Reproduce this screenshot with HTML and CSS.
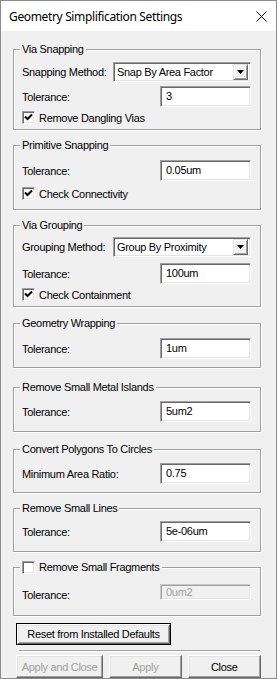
FILE: index.html
```html
<!DOCTYPE html>
<html>
<head>
<meta charset="utf-8">
<link rel="stylesheet" href="styles.css">
</head>
<body>
<div class="window">
  <div class="titlebar">
    <span class="title">Geometry Simplification Settings</span>
    <svg class="close-x" width="11" height="11" viewBox="0 0 11 11"><path d="M0.5 0.5 L10.5 10.5 M10.5 0.5 L0.5 10.5" stroke="#000" stroke-width="1" fill="none"/></svg>
  </div>
  <div class="content">
    <fieldset class="group g1">
      <legend>Via Snapping</legend>
      <div class="row row-combo">
        <span class="label">Snapping Method:</span>
        <div class="combo"><span class="combo-text">Snap By Area Factor</span><span class="combo-btn"><svg width="7" height="4" viewBox="0 0 7 4"><path d="M0 0 H7 L3.5 4 Z" fill="#000"/></svg></span></div>
      </div>
      <div class="row row-field gap-4">
        <span class="label">Tolerance:</span>
        <div class="field">3</div>
      </div>
      <div class="check-row gap-4">
        <span class="checkbox"><svg width="9" height="9" viewBox="0 0 9 9"><path d="M1 3.5 L3.5 6 L8 1.5" stroke="#000" stroke-width="2" fill="none"/></svg></span>
        <span>Remove Dangling Vias</span>
      </div>
    </fieldset>

    <fieldset class="group g2">
      <legend>Primitive Snapping</legend>
      <div class="row row-field">
        <span class="label">Tolerance:</span>
        <div class="field">0.05um</div>
      </div>
      <div class="check-row gap-6">
        <span class="checkbox"><svg width="9" height="9" viewBox="0 0 9 9"><path d="M1 3.5 L3.5 6 L8 1.5" stroke="#000" stroke-width="2" fill="none"/></svg></span>
        <span>Check Connectivity</span>
      </div>
    </fieldset>

    <fieldset class="group g3">
      <legend>Via Grouping</legend>
      <div class="row row-combo">
        <span class="label">Grouping Method:</span>
        <div class="combo"><span class="combo-text">Group By Proximity</span><span class="combo-btn"><svg width="7" height="4" viewBox="0 0 7 4"><path d="M0 0 H7 L3.5 4 Z" fill="#000"/></svg></span></div>
      </div>
      <div class="row row-field gap-6">
        <span class="label">Tolerance:</span>
        <div class="field">100um</div>
      </div>
      <div class="check-row gap-4">
        <span class="checkbox"><svg width="9" height="9" viewBox="0 0 9 9"><path d="M1 3.5 L3.5 6 L8 1.5" stroke="#000" stroke-width="2" fill="none"/></svg></span>
        <span>Check Containment</span>
      </div>
    </fieldset>

    <fieldset class="group g4">
      <legend>Geometry Wrapping</legend>
      <div class="row row-field">
        <span class="label">Tolerance:</span>
        <div class="field">1um</div>
      </div>
    </fieldset>

    <fieldset class="group g5">
      <legend>Remove Small Metal Islands</legend>
      <div class="row row-field">
        <span class="label">Tolerance:</span>
        <div class="field">5um2</div>
      </div>
    </fieldset>

    <fieldset class="group g6">
      <legend>Convert Polygons To Circles</legend>
      <div class="row row-field">
        <span class="label">Minimum Area Ratio:</span>
        <div class="field">0.75</div>
      </div>
    </fieldset>

    <fieldset class="group g7">
      <legend>Remove Small Lines</legend>
      <div class="row row-field">
        <span class="label">Tolerance:</span>
        <div class="field">5e-06um</div>
      </div>
    </fieldset>

    <fieldset class="group g8">
      <legend class="legend-check"><span class="checkbox"></span><span>Remove Small Fragments</span></legend>
      <div class="row row-field">
        <span class="label">Tolerance:</span>
        <div class="field field-disabled">0um2</div>
      </div>
    </fieldset>

    <div class="reset-wrap">
      <button class="btn btn-default">Reset from Installed Defaults</button>
    </div>
    <div class="separator"></div>
    <div class="button-bar">
      <button class="btn btn-disabled btn-applyclose">Apply and Close</button>
      <button class="btn btn-disabled btn-apply">Apply</button>
      <button class="btn btn-close">Close</button>
    </div>
  </div>
</div>
</body>
</html>
```

FILE: styles.css
```css
* {
  box-sizing: border-box;
}

html, body {
  margin: 0;
  padding: 0;
}

body {
  width: 277px;
  height: 679px;
  overflow: hidden;
  background: #3a3a3a;
  font-family: "Liberation Sans", Arial, sans-serif;
  font-size: 11px;
  letter-spacing: -0.3px;
  color: #000;
}

.window {
  width: 277px;
  height: 679px;
  border: 1px solid #8c8c8c;
  background: #f0f0f0;
  display: flex;
  flex-direction: column;
}

.titlebar {
  height: 30px;
  flex: none;
  background: #fff;
  display: flex;
  align-items: center;
  justify-content: space-between;
  padding: 0 9px 0 8px;
}

.title {
  font-family: "Noto Sans", sans-serif;
  font-size: 12px;
  letter-spacing: -0.35px;
  color: #000;
}

.close-x {
  display: block;
}

.content {
  padding: 0 15px 0 12px;
  display: flex;
  flex-direction: column;
}

.group {
  margin: 0;
  min-width: 0;
  border: 1px solid #a0a0a0;
  box-shadow: inset 1px 1px 0 #fff, 1px 1px 0 #fff;
  padding: 0 9px 0 8px;
  display: flex;
  flex-direction: column;
}

.group legend {
  padding: 0 2px;
  margin-left: -2px;
  height: 14px;
  line-height: 14px;
  background: #f0f0f0;
}

.legend-check {
  display: flex;
  align-items: center;
  gap: 4px;
}

.g1 { margin-top: 11px; padding-top: 6px; padding-bottom: 5px; }
.g2 { margin-top: 8px; padding-top: 8px; padding-bottom: 9px; }
.g3 { margin-top: 8px; padding-top: 5px; padding-bottom: 5px; }
.g4 { margin-top: 9px; padding-top: 8px; padding-bottom: 8px; }
.g5 { margin-top: 12px; padding-top: 7px; padding-bottom: 9px; }
.g6 { margin-top: 10px; padding-top: 7px; padding-bottom: 8px; }
.g7 { margin-top: 8px; padding-top: 6px; padding-bottom: 9px; }
.g8 { margin-top: 8px; padding-top: 10px; padding-bottom: 10px; }

.gap-4 { margin-top: 4px; }
.gap-6 { margin-top: 6px; }

.row {
  display: flex;
  align-items: center;
}

.row-combo { height: 20px; }
.row-field { height: 21px; }

.label {
  flex: 1;
}

.field {
  width: 91px;
  height: 21px;
  flex: none;
  background: #fff;
  border: 1px solid;
  border-color: #a0a0a0 #fff #fff #a0a0a0;
  box-shadow: inset 1px 1px 0 #696969, inset -1px -1px 0 #e3e3e3;
  padding: 0 5px;
  line-height: 19px;
}

.field-disabled {
  background: #f0f0f0;
  color: #a0a0a0;
  height: 16px;
  line-height: 14px;
  align-self: flex-start;
  border-color: #c8c8c8 #fff #fff #c8c8c8;
  box-shadow: inset 1px 1px 0 #a0a0a0, inset -1px -1px 0 #e3e3e3;
}

.combo {
  width: 138px;
  height: 20px;
  flex: none;
  display: flex;
  align-items: center;
  background: #fff;
  border: 1px solid;
  border-color: #a0a0a0 #fff #fff #a0a0a0;
  box-shadow: inset 1px 1px 0 #696969, inset -1px -1px 0 #e3e3e3;
  padding: 2px 2px 2px 3px;
}

.combo-text {
  flex: 1;
  line-height: 16px;
}

.combo-btn {
  width: 15px;
  height: 16px;
  flex: none;
  display: flex;
  align-items: center;
  justify-content: center;
  background: #f0f0f0;
  border: 1px solid;
  border-color: #e3e3e3 #696969 #696969 #e3e3e3;
  box-shadow: inset 1px 1px 0 #fff, inset -1px -1px 0 #a0a0a0;
}

.combo-btn svg {
  display: block;
}

.check-row {
  display: flex;
  align-items: center;
  gap: 4px;
  height: 13px;
}

.checkbox {
  width: 13px;
  height: 13px;
  flex: none;
  display: flex;
  align-items: center;
  justify-content: center;
  background: #fff;
  border: 1px solid;
  border-color: #a0a0a0 #fff #fff #a0a0a0;
  box-shadow: inset 1px 1px 0 #696969, inset -1px -1px 0 #e3e3e3;
}

.checkbox svg {
  display: block;
}

.reset-wrap {
  margin-top: 7px;
  padding-left: 3px;
  display: flex;
}

.btn {
  font-family: "Liberation Sans", Arial, sans-serif;
  font-size: 11px;
  letter-spacing: -0.3px;
  color: #000;
  background: #f0f0f0;
  border: 1px solid;
  border-color: #fff #696969 #696969 #fff;
  box-shadow: inset -1px -1px 0 #a0a0a0, inset 1px 1px 0 #e3e3e3;
  padding: 0;
  margin: 0;
  text-align: center;
}

.btn-default {
  width: 155px;
  height: 22px;
  border-color: #000;
  box-shadow: inset 1px 1px 0 #fff, inset -1px -1px 0 #696969, inset 2px 2px 0 #e3e3e3, inset -2px -2px 0 #a0a0a0;
}

.separator {
  margin: 5px 1px 0 6px;
  height: 2px;
  border-top: 1px solid #a0a0a0;
  border-bottom: 1px solid #fff;
}

.button-bar {
  margin-top: 3px;
  padding-left: 3px;
  display: flex;
  gap: 6px;
}

.button-bar .btn {
  height: 23px;
}

.btn-disabled {
  color: #a0a0a0;
}

.btn-applyclose { width: 89px; }
.btn-apply { width: 74px; }
.btn-close { width: 75px; }
```
